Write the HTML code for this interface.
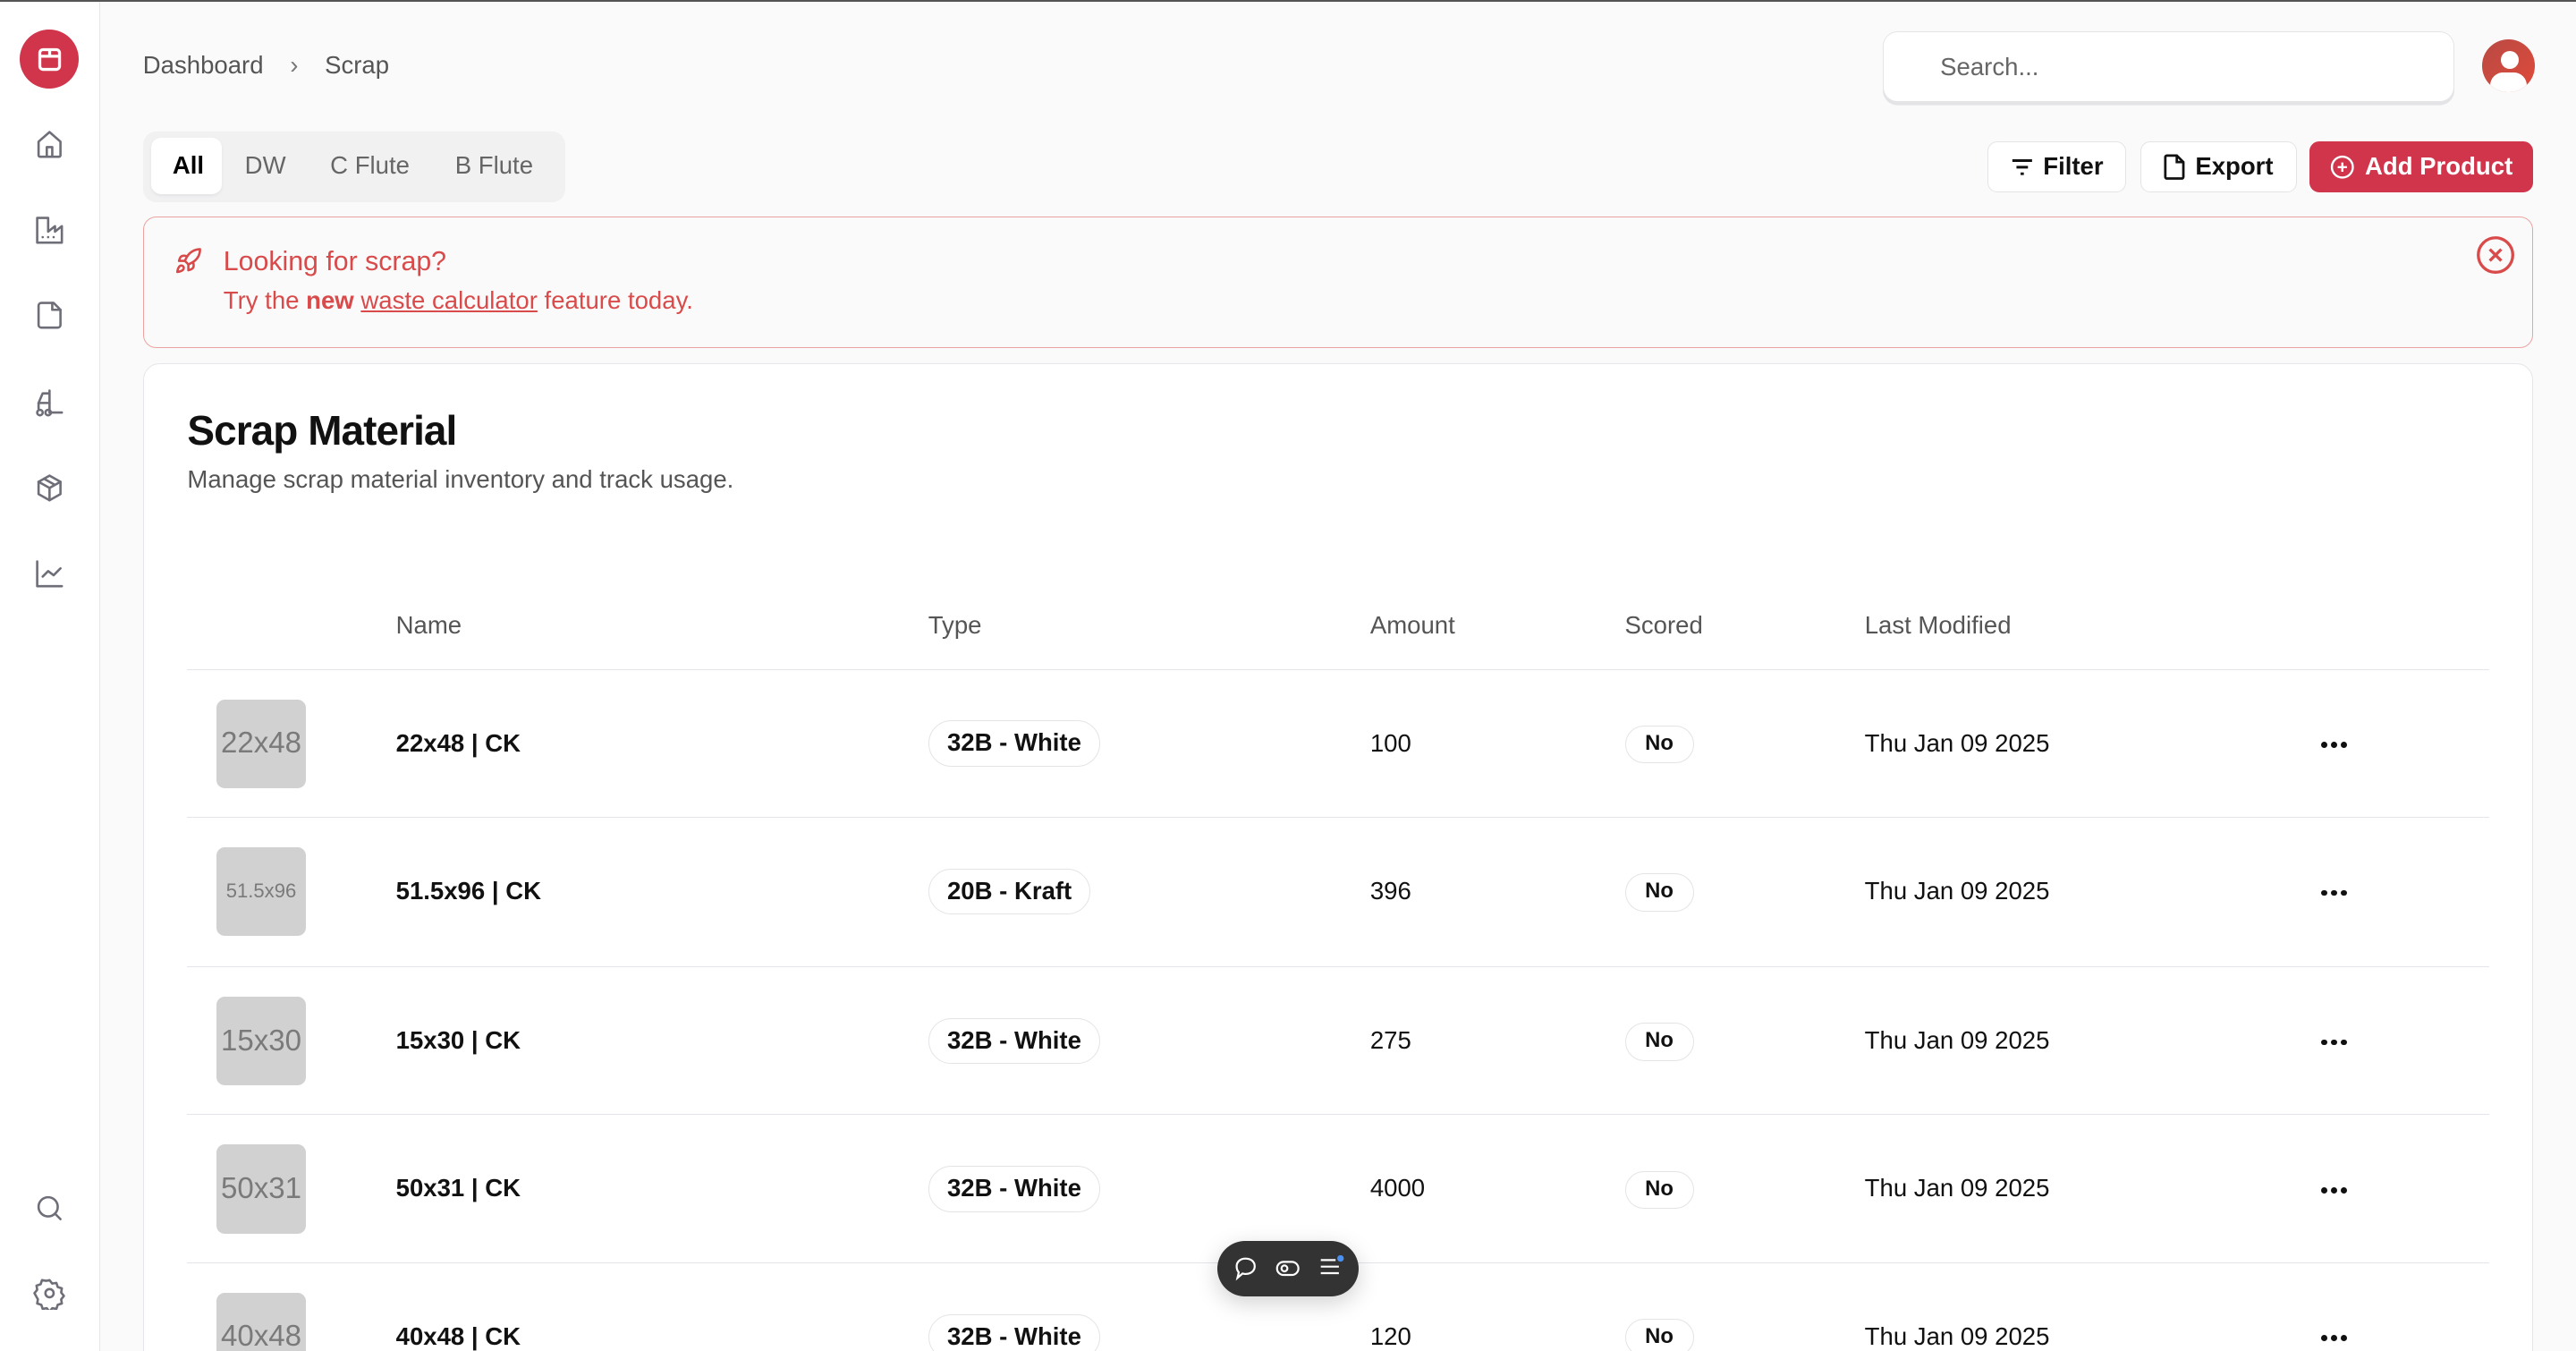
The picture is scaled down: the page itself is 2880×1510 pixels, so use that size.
<!DOCTYPE html>
<html><head><meta charset="utf-8"><style>
*{box-sizing:border-box;margin:0;padding:0}
html,body{width:2880px;height:1510px;overflow:hidden;background:#fafafa}
#r{zoom:1.836735;width:1568px;height:822px;position:relative;font-family:"Liberation Sans",sans-serif;color:#111;background:#fafafa;overflow:hidden}
.a{position:absolute}
.sb{left:0;top:0;width:61px;height:822px;background:#fff;border-right:1px solid #e6e6ea}
.ic{position:absolute;left:20px;width:20px;height:20px}
.ic svg{width:20px;height:20px;fill:none;stroke:#6e6e78;stroke-width:1.7;stroke-linecap:round;stroke-linejoin:round}
.btn{position:absolute;top:86px;height:31px;border:1px solid #e4e4e7;border-radius:6px;background:#fff;font-size:15px;font-weight:bold;display:flex;align-items:center;justify-content:center;gap:6px}
.th{position:absolute;top:372px;font-size:15px;color:#555}
.row{position:absolute;left:114px;width:1401px;height:90px;border-top:1px solid #e4e4ea}
.thumb{position:absolute;left:18px;top:18px;width:54px;height:54px;background:#d1d1d1;border-radius:5px;color:#7a7a7a;font-size:18px;display:flex;align-items:center;justify-content:center;overflow:hidden;white-space:nowrap}
.nm{position:absolute;left:127px;top:36px;font-size:15px;font-weight:bold}
.badge{position:absolute;left:451px;top:31px;height:28px;padding:0 11px;border:1px solid #e4e4e7;border-radius:14px;font-size:15px;font-weight:bold;line-height:26px;background:#fff}
.amt{position:absolute;left:720px;top:36px;font-size:15px}
.no{position:absolute;left:875px;top:34px;height:23px;width:42px;border:1px solid #e4e4e7;border-radius:12px;font-size:13px;font-weight:bold;text-align:center;line-height:21px}
.dt{position:absolute;left:1021px;top:36px;font-size:15px}
.dots{position:absolute;left:1299px;top:44px;display:flex;gap:2.5px}
.dots i{width:3.5px;height:3.5px;border-radius:2px;background:#111;display:block}
</style></head><body><div id="r">
<div class="a" style="left:0;top:0;width:1568px;height:1px;background:#555;z-index:5"></div>
<div class="a sb"></div>
<div class="a" style="left:12px;top:18px;width:36px;height:36px;border-radius:18px;background:#d0354b"></div>
<svg class="a" style="left:21px;top:27px" width="18" height="18" viewBox="0 0 18 18" fill="none" stroke="#fff" stroke-width="1.8"><rect x="3" y="3" width="12" height="12" rx="2"/><path d="M3 7h12M9 3v4"/></svg>
<div class="ic" style="top:78px"><svg viewBox="0 0 24 24"><path d="M4 10l8-7 8 7v10a1 1 0 0 1-1 1H5a1 1 0 0 1-1-1z"/><path d="M10 21v-7h4v7"/></svg></div>
<div class="ic" style="top:130px"><svg viewBox="0 0 24 24"><path d="M3 3v18h18V9l-5 4V9l-5 4V3z"/><path d="M7 17h.01M11 17h.01M15 17h.01"/></svg></div>
<div class="ic" style="top:182px"><svg viewBox="0 0 24 24"><path d="M15 3H6a2 2 0 0 0-2 2v14a2 2 0 0 0 2 2h12a2 2 0 0 0 2-2V8z"/><path d="M14 3v5h6"/></svg></div>
<div class="ic" style="top:235px"><svg viewBox="0 0 24 24"><path d="M12 3v16h9M4 16v-4l3-7h5"/><circle cx="5" cy="19" r="2"/><circle cx="11" cy="19" r="2"/><path d="M4 12h8"/></svg></div>
<div class="ic" style="top:287px"><svg viewBox="0 0 24 24"><path d="M12 3l8 4.5v9L12 21l-8-4.5v-9z"/><path d="M4 7.5l8 4.5 8-4.5M12 12v9M8 5.3l8 4.5"/></svg></div>
<div class="ic" style="top:339px"><svg viewBox="0 0 24 24"><path d="M3 3v18h18"/><path d="M7 14l4-4 4 3 5-5"/></svg></div>
<div class="ic" style="top:725px"><svg viewBox="0 0 24 24"><circle cx="11" cy="11" r="7"/><path d="M20 20l-4-4"/></svg></div>
<div class="ic" style="top:777px"><svg viewBox="0 0 24 24"><circle cx="12" cy="12" r="3"/><path d="M12 2.5l2 2.5 3-.5 1 3 3 1-.5 3 2 2.5-2 2.5.5 3-3 1-1 3-3-.5-2 2.5-2-2.5-3 .5-1-3-3-1 .5-3L1 12l2-2.5-.5-3 3-1 1-3 3 .5z"/></svg></div>

<div class="a" style="left:87px;top:31px;font-size:15px;color:#555">Dashboard <span style="margin:0 12px;color:#777">›</span> Scrap</div>
<div class="a" style="left:1146px;top:19px;width:348px;height:43px;background:#fff;border:1px solid #e5e5e8;border-radius:9px;box-shadow:0 2px 0 #e4e4e7"></div>
<div class="a" style="left:1181px;top:32px;font-size:15px;color:#666">Search...</div>
<div class="a" style="left:1511px;top:24px;width:32px;height:32px;border-radius:16px;background:linear-gradient(135deg,#b84a44,#e04a3a);overflow:hidden"><div class="a" style="left:11px;top:7px;width:11px;height:11px;border-radius:6px;background:#fff"></div><div class="a" style="left:5px;top:20px;width:22px;height:16px;border-radius:11px;background:#fff"></div></div>

<div class="a" style="left:87px;top:80px;width:257px;height:43px;background:#f1f1f2;border-radius:8px"></div>
<div class="a" style="left:92px;top:84px;width:43px;height:34px;background:#fff;border-radius:6px;box-shadow:0 1px 2px rgba(0,0,0,.06)"></div>
<div class="a" style="left:105px;top:92px;font-size:15px;font-weight:bold;color:#000">All</div>
<div class="a" style="left:149px;top:92px;font-size:15px;color:#666">DW</div>
<div class="a" style="left:201px;top:92px;font-size:15px;color:#666">C Flute</div>
<div class="a" style="left:277px;top:92px;font-size:15px;color:#666">B Flute</div>

<div class="btn" style="left:1210px;width:84px"><svg width="14" height="14" viewBox="0 0 14 14" stroke="#111" stroke-width="1.6"><path d="M1 3h12M3.5 7h7M6 11h2"/></svg>Filter</div>
<div class="btn" style="left:1303px;width:95px"><svg width="13" height="16" viewBox="0 0 13 16" fill="none" stroke="#111" stroke-width="1.5"><path d="M8 1H2a1 1 0 0 0-1 1v12a1 1 0 0 0 1 1h9a1 1 0 0 0 1-1V5zM8 1v4h4"/></svg>Export</div>
<div class="btn" style="left:1406px;width:136px;background:#d0354b;border-color:#d0354b;color:#fff"><svg width="15" height="15" viewBox="0 0 16 16" fill="none" stroke="#fff" stroke-width="1.4"><circle cx="8" cy="8" r="6.8"/><path d="M8 5v6M5 8h6"/></svg>Add Product</div>

<div class="a" style="left:87px;top:132px;width:1455px;height:80px;border:1px solid #eba3a1;border-radius:8px;background:#fafafa"></div>
<svg class="a" style="left:106px;top:150px" width="17" height="17" viewBox="0 0 24 24" fill="none" stroke="#d94a4a" stroke-width="2" stroke-linecap="round" stroke-linejoin="round"><path d="M4.5 16.5c-1.5 1.3-2 5-2 5s3.7-.5 5-2c.7-.8.7-2.1-.1-2.9a2.2 2.2 0 0 0-2.9-.1z"/><path d="M12 15l-3-3a22 22 0 0 1 2-3.9A12.9 12.9 0 0 1 22 2c0 2.7-.8 7.5-6 11a22.4 22.4 0 0 1-4 2z"/><path d="M9 12H4s.6-3 2-4c1.6-1.1 5 0 5 0M12 15v5s3-.6 4-2c1.1-1.6 0-5 0-5"/></svg>
<div class="a" style="left:136px;top:150px;font-size:16.5px;color:#d94a4a">Looking for scrap?</div>
<div class="a" style="left:136px;top:174px;font-size:15px;color:#d94a4a">Try the <b>new</b> <u>waste calculator</u> feature today.</div>
<svg class="a" style="left:1507px;top:143px" width="24" height="24" viewBox="0 0 24 24" fill="none" stroke="#d94a4a" stroke-width="1.8"><circle cx="12" cy="12" r="10.5"/><path d="M8.5 8.5l7 7M15.5 8.5l-7 7"/></svg>

<div class="a" style="left:87px;top:221px;width:1455px;height:640px;background:#fff;border:1px solid #e6e6ea;border-radius:10px"></div>
<div class="a" style="left:114px;top:247px;font-size:25px;font-weight:bold;letter-spacing:-0.5px">Scrap Material</div>
<div class="a" style="left:114px;top:283px;font-size:15px;color:#555">Manage scrap material inventory and track usage.</div>
<div class="th" style="left:241px">Name</div>
<div class="th" style="left:565px">Type</div>
<div class="th" style="left:834px">Amount</div>
<div class="th" style="left:989px">Scored</div>
<div class="th" style="left:1135px">Last Modified</div>

<div class="row" style="top:407px"><div class="thumb">22x48</div><div class="nm">22x48 | CK</div><div class="badge">32B - White</div><div class="amt">100</div><div class="no">No</div><div class="dt">Thu Jan 09 2025</div><div class="dots"><i></i><i></i><i></i></div></div>
<div class="row" style="top:497px"><div class="thumb" style="font-size:12px">51.5x96</div><div class="nm">51.5x96 | CK</div><div class="badge">20B - Kraft</div><div class="amt">396</div><div class="no">No</div><div class="dt">Thu Jan 09 2025</div><div class="dots"><i></i><i></i><i></i></div></div>
<div class="row" style="top:588px"><div class="thumb">15x30</div><div class="nm">15x30 | CK</div><div class="badge">32B - White</div><div class="amt">275</div><div class="no">No</div><div class="dt">Thu Jan 09 2025</div><div class="dots"><i></i><i></i><i></i></div></div>
<div class="row" style="top:678px"><div class="thumb">50x31</div><div class="nm">50x31 | CK</div><div class="badge">32B - White</div><div class="amt">4000</div><div class="no">No</div><div class="dt">Thu Jan 09 2025</div><div class="dots"><i></i><i></i><i></i></div></div>
<div class="row" style="top:768px"><div class="thumb">40x48</div><div class="nm">40x48 | CK</div><div class="badge">32B - White</div><div class="amt">120</div><div class="no">No</div><div class="dt">Thu Jan 09 2025</div><div class="dots"><i></i><i></i><i></i></div></div>

<div class="a" style="left:741px;top:755px;width:86px;height:34px;border-radius:17px;background:#333;box-shadow:0 4px 14px rgba(0,0,0,.18)"></div>
<svg class="a" style="left:750px;top:764px" width="16" height="16" viewBox="0 0 16 16" fill="none" stroke="#fff" stroke-width="1.2"><path d="M8 2c3.3 0 5.5 2 5.5 4.7S11.3 11.4 8 11.4c-.7 0-1.3-.1-1.9-.3L3 13.8l.8-3.4C3 9.6 2.5 8.2 2.5 6.7 2.5 4 4.7 2 8 2z"/></svg>
<svg class="a" style="left:776px;top:764px" width="16" height="16" viewBox="0 0 16 16" fill="none" stroke="#fff" stroke-width="1.2"><rect x="1.5" y="4" width="13" height="8" rx="4"/><circle cx="6" cy="8" r="1.8"/></svg>
<svg class="a" style="left:802px;top:763px" width="18" height="16" viewBox="0 0 18 16" fill="none" stroke="#fff" stroke-width="1.2"><path d="M2 4h9M2 8h11M2 12h11"/><circle cx="14" cy="3" r="2" fill="#4a90f0" stroke="none"/></svg>
</div></body></html>
